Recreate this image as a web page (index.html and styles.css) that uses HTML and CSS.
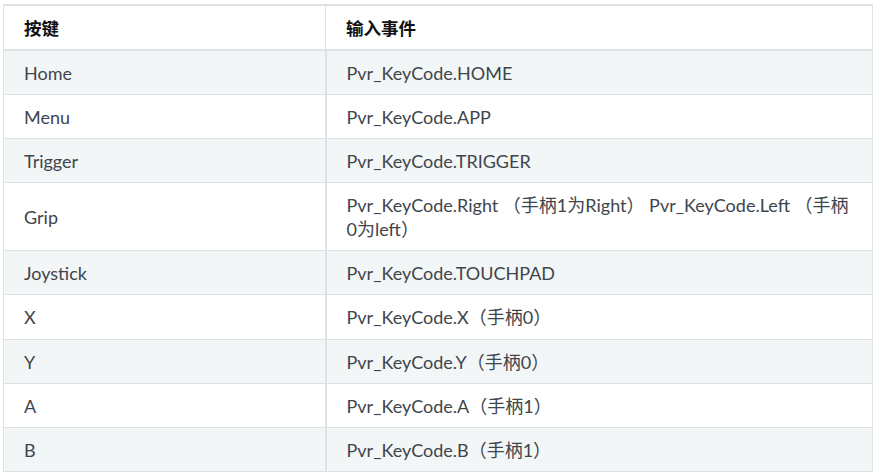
FILE: index.html
```html
<!DOCTYPE html>
<html lang="zh">
<head>
<meta charset="utf-8">
<link rel="stylesheet" href="styles.css">
</head>
<body>
<table class="keys">
  <colgroup><col class="c1"><col class="c2"></colgroup>
  <thead>
    <tr><th>按键</th><th class="sep">输入事件</th></tr>
  </thead>
  <tbody>
    <tr><td>Home</td><td>Pvr_KeyCode.HOME</td></tr>
    <tr><td>Menu</td><td>Pvr_KeyCode.APP</td></tr>
    <tr><td>Trigger</td><td>Pvr_KeyCode.TRIGGER</td></tr>
    <tr><td>Grip</td><td>Pvr_KeyCode.Right （手柄1为Right） Pvr_KeyCode.Left （手柄0为left）</td></tr>
    <tr><td>Joystick</td><td>Pvr_KeyCode.TOUCHPAD</td></tr>
    <tr><td>X</td><td>Pvr_KeyCode.X（手柄0）</td></tr>
    <tr><td>Y</td><td>Pvr_KeyCode.Y（手柄0）</td></tr>
    <tr><td>A</td><td>Pvr_KeyCode.A（手柄1）</td></tr>
    <tr><td>B</td><td>Pvr_KeyCode.B（手柄1）</td></tr>
  </tbody>
</table>
</body>
</html>
```
FILE: styles.css
```css
html, body {
  margin: 0;
  padding: 0;
  background: #ffffff;
}
body {
  padding: 4px 0 0 3px;
  font-family: Lato, "Noto Sans CJK SC", sans-serif;
  font-size: 18px;
  color: #3e454c;
}
.keys {
  width: 870px;
  border-collapse: collapse;
  table-layout: fixed;
  border: 1px solid #dfe2e5;
  border-top: 2px solid #dfe2e5;
}
.c1 { width: 322px; }
.keys th, .keys td {
  border: 1px solid #dfe2e5;
  padding: 10px 20px 9.1px;
  line-height: 24px;
  text-align: left;
  vertical-align: middle;
}
.keys th {
  font-weight: bold;
  color: #111;
  padding: 10px 20px 9px;
  border-bottom: 2px solid #dfe2e5;
  font-family: "Noto Sans CJK SC", sans-serif;
  font-size: 17.5px;
}
.keys th.sep {
  border-left: 1px solid #8a8a8a;
}
.keys tbody tr:nth-child(odd) {
  background: #f3f6f7;
}
.keys td:first-child {
  border-right: 2px solid #dfe2e5;
}
```
